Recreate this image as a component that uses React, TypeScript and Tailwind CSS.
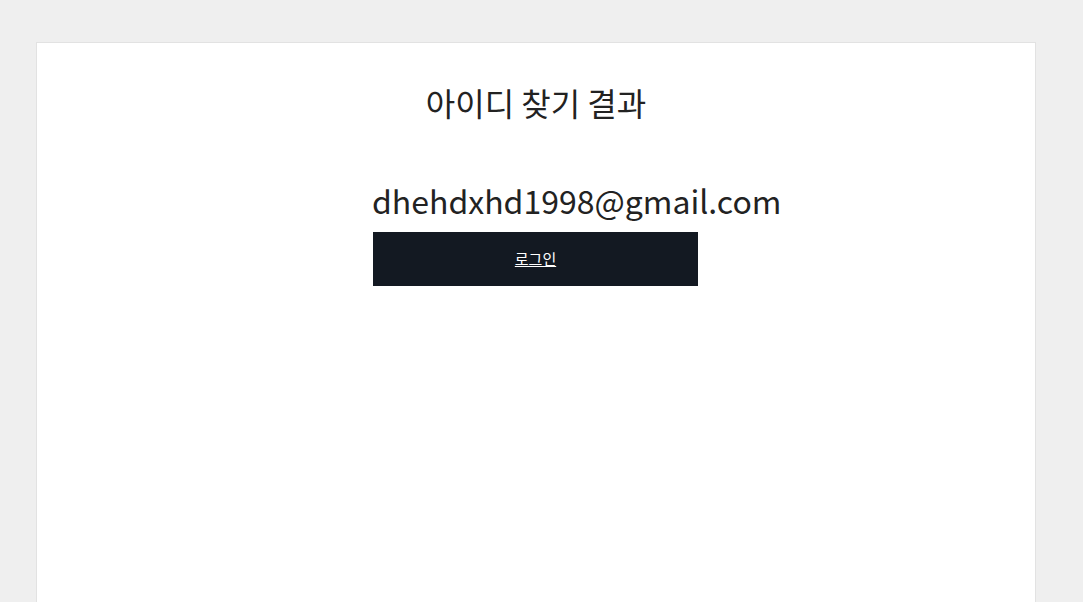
export default function App() {
  return (
    <div
      className="min-h-[602px] bg-[#efefef] pt-[42px]"
      style={{ fontFamily: '"Noto Sans CJK KR", "Noto Sans", sans-serif' }}
    >
      <div className="ml-[36px] min-h-[560px] w-[1000px] border border-b-0 border-[#e2e2e2] bg-white">
        <h1 className="pt-[35px] text-center text-[32px] leading-[48px] text-[#222]">아이디 찾기 결과</h1>
        <div className="ml-[336px] mt-[50px] w-[325px]">
          <p className="-ml-[1px] whitespace-nowrap text-[32px] leading-[48px] text-[#222]">dhehdxhd1998@gmail.com</p>
          <button className="mt-[8px] flex h-[54px] w-full items-center justify-center bg-[#131922] text-[15px] text-white underline">
            로그인
          </button>
        </div>
      </div>
    </div>
  );
}
